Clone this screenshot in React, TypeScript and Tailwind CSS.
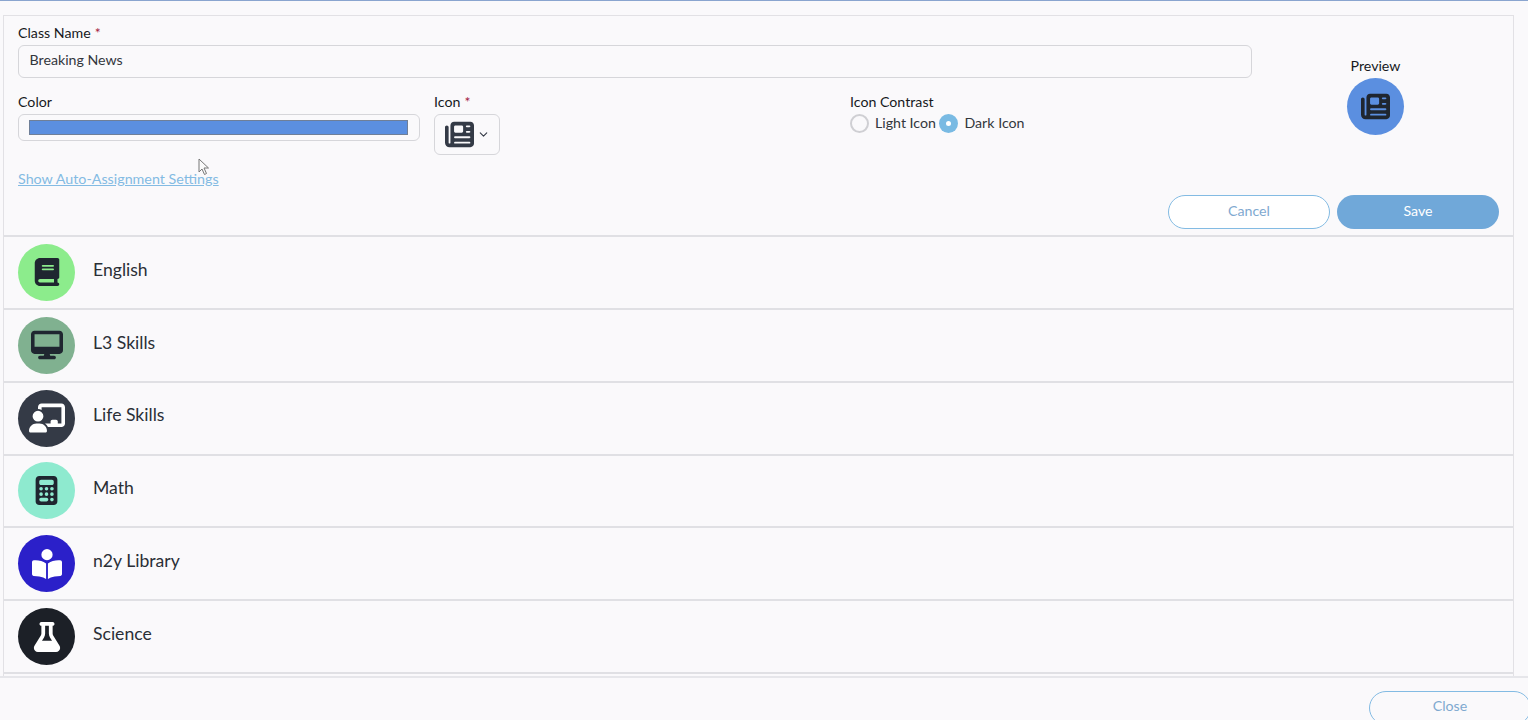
import { FaNewspaper, FaBook, FaDesktop, FaChalkboardUser, FaCalculator, FaBookOpenReader, FaFlask } from 'react-icons/fa6'
import { ChevronDown } from 'lucide-react'

const classes = [
  { name: 'English', icon: FaBook, bg: 'bg-[#8cec8c]', fg: 'text-[#1f2630]', size: 28 },
  { name: 'L3 Skills', icon: FaDesktop, bg: 'bg-[#80b190]', fg: 'text-[#1f2630]', size: 32 },
  { name: 'Life Skills', icon: FaChalkboardUser, bg: 'bg-[#343a46]', fg: 'text-white', size: 36 },
  { name: 'Math', icon: FaCalculator, bg: 'bg-[#8eeacf]', fg: 'text-[#1f2630]', size: 29 },
  { name: 'n2y Library', icon: FaBookOpenReader, bg: 'bg-[#2b20c9]', fg: 'text-white', size: 30 },
  { name: 'Science', icon: FaFlask, bg: 'bg-[#1c2027]', fg: 'text-white', size: 30 },
]

function Label({ text, required }: { text: string; required?: boolean }) {
  return (
    <p className="text-[14.2px] leading-[17px] text-[#17191d]">
      {text}
      {required && <span className="text-[#a3213f] ml-1">*</span>}
    </p>
  )
}

export default function App() {
  return (
    <div className="h-screen overflow-hidden flex flex-col bg-[#faf9fb] border-t border-[#8aa5cf] font-['Lato','Liberation_Sans',sans-serif] relative">
      <div className="flex-1 overflow-hidden pt-[14px] pl-[3px] pr-[14px]">
        <div className="border border-[#e2e1e5]">
          <div className="h-[219px] px-[14px] pt-[8px] flex flex-wrap content-start relative">
            <div className="w-[1234px]">
              <Label text="Class Name" required />
              <div className="mt-[4px] h-[33px] border border-[#d6d6da] rounded-[6px] px-[10.5px] pb-[3px] flex items-center text-[14.2px] text-[#33373d]">
                Breaking News
              </div>
              <div className="mt-[15px] grid grid-cols-[416px_416px_1fr]">
                <div className="pr-[14px]">
                  <Label text="Color" />
                  <div className="mt-[4px] h-[27px] border border-[#d6d6da] rounded-[6px] pl-[10px] pr-[11px] flex items-center">
                    <div className="h-[15px] w-full bg-[#5b8fe0] border border-[#6f7f98]" />
                  </div>
                </div>
                <div>
                  <Label text="Icon" required />
                  <div className="mt-[4px] w-[66px] h-[41px] border border-[#d6d6da] rounded-[6px] flex items-center pl-[10px] gap-[3px] text-[#343a46]">
                    <FaNewspaper size={29} />
                    <ChevronDown size={13} strokeWidth={2} />
                  </div>
                </div>
                <div>
                  <Label text="Icon Contrast" />
                  <div className="flex items-center text-[14.2px] text-[#33373d] mt-[2px]">
                    <span className="w-[19px] h-[19px] rounded-full border-2 border-[#cfcfd3]" />
                    <span className="ml-[6px] pb-[2px]">Light Icon</span>
                    <span className="ml-[3.5px] w-[19px] h-[19px] rounded-full bg-[#79bae3] flex items-center justify-center">
                      <span className="w-[5px] h-[5px] rounded-full bg-white" />
                    </span>
                    <span className="ml-[6px] pb-[2px]">Dark Icon</span>
                  </div>
                </div>
              </div>
              <a className="block mt-[15px] text-[14.3px] leading-[17px] text-[#83bbe3] underline">Show Auto-Assignment Settings</a>
            </div>
            <div className="flex-1 flex flex-col items-center pt-[33px]">
              <p className="text-[14.2px] leading-[17px] text-[#17191d]">Preview</p>
              <div className="mt-[4px] w-[57px] h-[57px] rounded-full bg-[#5b8fe0] text-[#1f2630] flex items-center justify-center">
                <FaNewspaper size={29} />
              </div>
            </div>
            <div className="absolute right-[14px] top-[179px] flex gap-[7px] text-[14.2px]">
              <button className="w-[162px] h-[34px] rounded-full border border-[#83bbe3] bg-white pb-[3px] text-[#7fa9d0]">Cancel</button>
              <button className="w-[162px] h-[34px] rounded-full bg-[#70a8d9] pb-[3px] text-white">Save</button>
            </div>
          </div>
          {classes.map(({ name, icon: Icon, bg, fg, size }) => (
            <div key={name} className="h-[72.85px] border-t-2 border-[#e0e0e4] flex items-center pl-[14px]">
              <div className={`w-[57px] h-[57px] rounded-full flex items-center justify-center ${bg} ${fg}`}>
                <Icon size={size} />
              </div>
              <span className="ml-[18px] pb-[5px] text-[17.6px] text-[#2a2f36]">{name}</span>
            </div>
          ))}
          <div className="h-[72.85px] border-t-2 border-[#e0e0e4]" />
        </div>
      </div>
      <div className="h-[44px] shrink-0 border-t-2 border-[#e6e6ea] flex justify-end pt-[13px] -mr-[3px]">
        <button className="w-[162px] h-[34px] rounded-full border border-[#83bbe3] pb-[4px] text-[14.2px] text-[#7fa9d0]">Close</button>
      </div>
      <svg className="absolute left-[198px] top-[157px]" width="12" height="18" viewBox="0 0 12 18">
        <path d="M1 1v13l3-3 2.5 5.5 2-1L6 10h4.5z" fill="#fafafa" stroke="#777" strokeWidth="1" />
      </svg>
    </div>
  )
}
